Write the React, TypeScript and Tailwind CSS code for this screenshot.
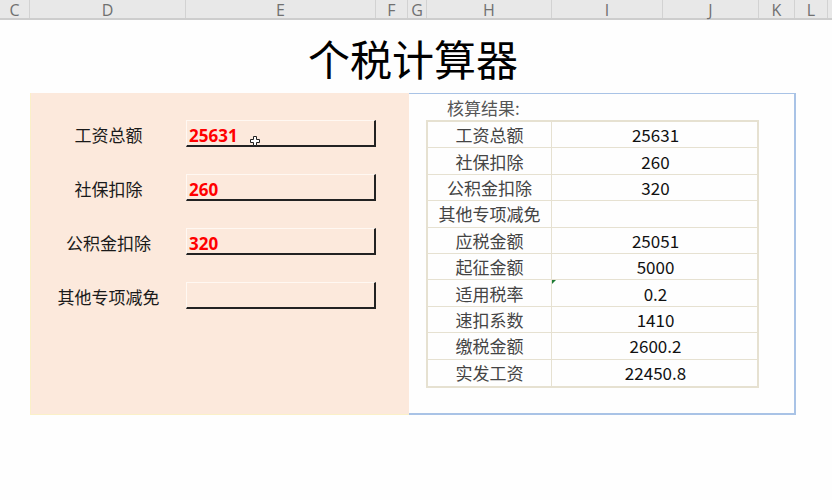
import React from "react";

const cols: [string, number][] = [
  ["C", 30],
  ["D", 156],
  ["E", 190],
  ["F", 32],
  ["G", 19],
  ["H", 125],
  ["I", 111],
  ["J", 96],
  ["K", 36],
  ["L", 33],
];

const inputs: [string, string][] = [
  ["工资总额", "25631"],
  ["社保扣除", "260"],
  ["公积金扣除", "320"],
  ["其他专项减免", ""],
];

const rows: [string, string][] = [
  ["工资总额", "25631"],
  ["社保扣除", "260"],
  ["公积金扣除", "320"],
  ["其他专项减免", ""],
  ["应税金额", "25051"],
  ["起征金额", "5000"],
  ["适用税率", "0.2"],
  ["速扣系数", "1410"],
  ["缴税金额", "2600.2"],
  ["实发工资", "22450.8"],
];

const font = { fontFamily: '"Noto Sans CJK SC", "Noto Sans", sans-serif' };

export default function App() {
  return (
    <div className="w-[832px] h-[500px] bg-[#fefefe] overflow-hidden" style={font}>
      {/* column header */}
      <div className="flex h-[20px] bg-[#e8e8e8] border-b-2 border-[#cdcdcd]">
        {cols.map(([c, w]) => (
          <div
            key={c}
            className="flex items-center justify-center border-r border-[#d2d2d2] text-[16px] leading-none text-[#707070] shrink-0 pt-[1px]"
            style={{ width: w, fontFamily: '"Open Sans", "Liberation Sans", sans-serif' }}
          >
            {c}
          </div>
        ))}
      </div>

      {/* title */}
      <div className="h-[73px] flex items-center justify-center pr-[6px] pt-[2px]">
        <span className="text-[42px] leading-none text-black">个税计算器</span>
      </div>

      {/* panels */}
      <div className="flex ml-[30px]">
        {/* left panel */}
        <div className="w-[379px] h-[322px] bg-[#fce9dc] border-l border-b border-[#fbf0c8] flex flex-col pt-[27px] gap-[27px]">
          {inputs.map(([label, val], i) => (
            <div key={label} className="flex items-center h-[27px]">
              <div className="w-[155px] text-center text-[17px] text-[#1a1a1a] leading-none pt-[2px]">{label}</div>
              <div className="relative w-[190px] h-[27px] border-t border-l border-[#fff8f2] border-b-2 border-r-2 border-b-[#222] border-r-[#222] flex items-center pl-[2px] pt-[4px]">
                <span
                  className="text-[17px] font-bold text-[#ff0000] leading-none"
                  style={{ fontFamily: '"Open Sans", "Noto Sans", sans-serif' }}
                >
                  {val}
                </span>
                {i === 0 && (
                  <svg className="absolute left-[63px] top-[15px]" width="10" height="10" viewBox="0 0 10 10">
                    <path
                      d="M3.5 0.5h3v3h3v3h-3v3h-3v-3h-3v-3h3z"
                      fill="#fff"
                      stroke="#222"
                      strokeWidth="1"
                    />
                  </svg>
                )}
              </div>
            </div>
          ))}
        </div>

        {/* right panel */}
        <div className="w-[387px] h-[322px] border-t border-r-2 border-b-2 border-[#a9c3e6] bg-[#fefefe] pl-[17px]">
          <div className="h-[26px] flex items-center pl-[21px] text-[17px] text-[#555] leading-none">核算结果:</div>
          <div className="w-[333px] border-2 border-[#e6e1d1]">
            {rows.map(([label, val], i) => (
              <div
                key={label}
                className={`flex h-[26.4px] ${i < rows.length - 1 ? "border-b border-[#e6e1d1]" : ""}`}
              >
                <div className="w-[124px] border-r border-[#e6e1d1] flex items-center justify-center text-[17px] text-[#444] leading-none">
                  {label}
                </div>
                <div className="relative flex-1 flex items-center justify-center text-[17px] text-[#111] leading-none pl-[2px]">
                  {val}
                  {i === 6 && (
                    <div className="absolute left-0 top-0 w-0 h-0 border-t-[4px] border-r-[4px] border-t-[#1e7b34] border-r-transparent" />
                  )}
                </div>
              </div>
            ))}
          </div>
        </div>
      </div>
    </div>
  );
}
